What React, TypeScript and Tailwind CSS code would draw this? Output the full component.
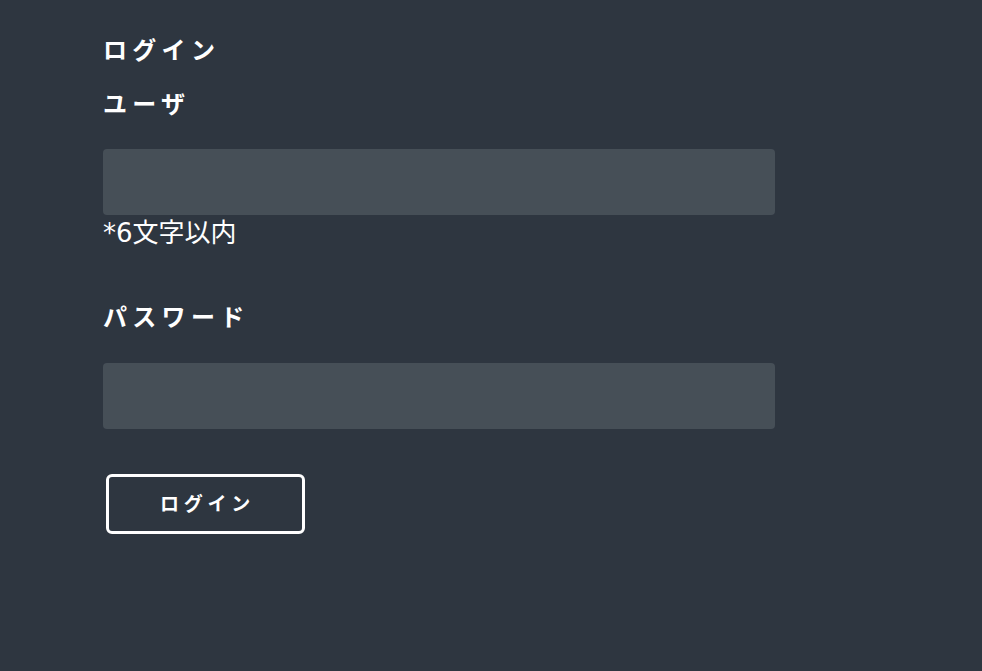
import React from "react";

export default function App() {
  return (
    <div
      className="min-h-[671px] w-full bg-[#2e3640] text-white pl-[103px] pt-[33px]"
      style={{ fontFamily: '"DejaVu Sans", "Noto Sans CJK JP", sans-serif' }}
    >
      <div className="text-[24px] font-bold leading-[36px] tracking-[5.3px]">ログイン</div>
      <div className="mt-[18px] text-[24px] font-bold leading-[36px] tracking-[5.3px]">ユーザ</div>
      <input
        type="text"
        className="mt-[26px] block h-[66px] w-[672px] rounded-[4px] bg-[#464f57] outline-none px-3 text-white"
      />
      <div className="mt-[2px] text-[26px] leading-[32px]">*6文字以内</div>
      <div className="mt-[51px] text-[24px] font-bold leading-[36px] tracking-[5.3px]">パスワード</div>
      <input
        type="password"
        className="mt-[27px] block h-[66px] w-[672px] rounded-[4px] bg-[#464f57] outline-none px-3 text-white"
      />
      <button
        type="button"
        className="ml-[3px] mt-[45px] flex h-[60px] w-[199px] items-center justify-center rounded-[6px] border-[3px] border-white bg-transparent pl-[4px] text-[19px] font-bold tracking-[4.7px] text-white"
      >
        ログイン
      </button>
    </div>
  );
}
